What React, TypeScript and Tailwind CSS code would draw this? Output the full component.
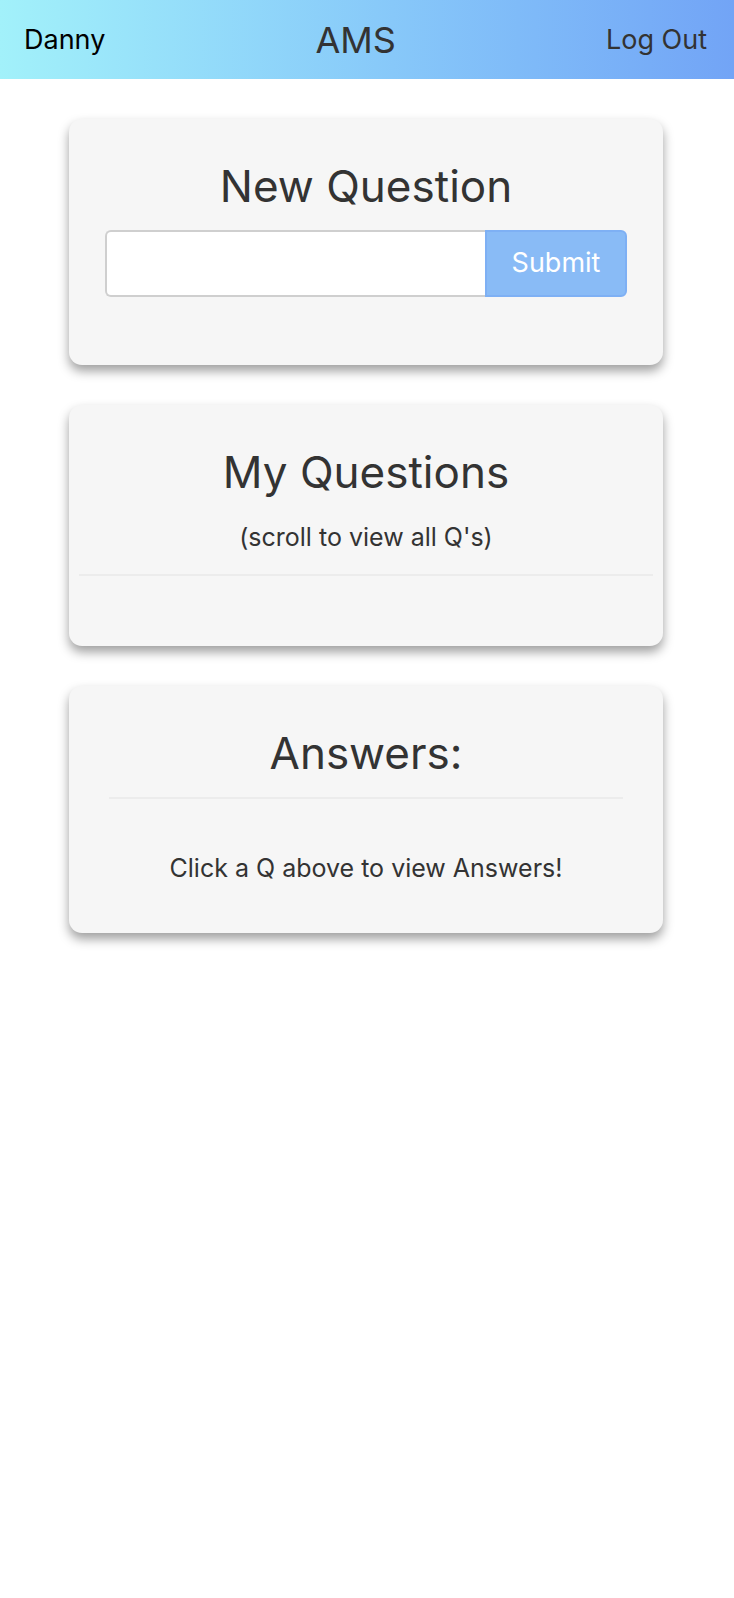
import React, { useState } from 'react';

const font = { fontFamily: 'Inter, "Noto Sans", sans-serif' };

const Card: React.FC<{ children: React.ReactNode; className?: string }> = ({ children, className }) => (
  <div className={`rounded-[13px] bg-[#f6f6f6] shadow-[0_6px_11px_rgba(0,0,0,0.38)] ${className ?? ''}`}>
    {children}
  </div>
);

const App: React.FC = () => {
  const [question, setQuestion] = useState<string>('');

  return (
    <div className="min-h-screen bg-white text-[#333333]" style={font}>
      {/* top bar */}
      <header className="flex h-[79px] items-center justify-between bg-linear-to-r from-[#a2f1fa] to-[#72a4f6] pl-[24px] pr-[27px]">
        <span className="text-[27px] leading-none text-black">Danny</span>
        <span className="text-[36px] leading-none">AMS</span>
        <span className="text-[27px] leading-none">Log Out</span>
      </header>

      <main className="flex flex-col gap-[40px] pl-[69px] pr-[71px] pt-[40px]">
        <Card className="px-[36px] pt-[41px] pb-[68px]">
          <h2 className="text-center text-[44px] leading-[53px]">New Question</h2>
          <div className="mt-[17px] flex h-[67px]">
            <input
              value={question}
              onChange={(e) => setQuestion(e.target.value)}
              className="min-w-0 flex-1 rounded-l-[6px] border-2 border-r-0 border-[#cfcfcf] bg-white px-3 text-[24px] outline-none"
            />
            <button className="w-[142px] rounded-r-[6px] border-2 border-[#7eb0f4] bg-[#89bbf6] text-[27px] text-white">
              Submit
            </button>
          </div>
        </Card>

        <Card className="pt-[41px] pb-[70px]">
          <h2 className="text-center text-[44px] leading-[53px]">My Questions</h2>
          <p className="mt-[23px] text-center text-[25px] leading-[30px]">(scroll to view all Q's)</p>
          <div className="mx-[10px] mt-[22px] h-[2px] bg-[#ececec]" />
        </Card>

        <Card className="pt-[41px] pb-[50px]">
          <h2 className="text-center text-[44px] leading-[53px]">Answers:</h2>
          <div className="mx-[40px] mt-[17px] h-[2px] bg-[#ececec]" />
          <p className="mt-[54px] text-center text-[25px] leading-[30px]">Click a Q above to view Answers!</p>
        </Card>
      </main>
    </div>
  );
};

export default App;
